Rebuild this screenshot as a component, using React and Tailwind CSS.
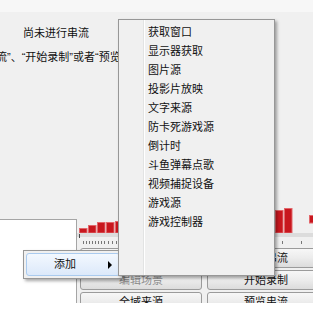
const sources = [
  "获取窗口",
  "显示器获取",
  "图片源",
  "投影片放映",
  "文字来源",
  "防卡死游戏源",
  "倒计时",
  "斗鱼弹幕点歌",
  "视频捕捉设备",
  "游戏源",
  "游戏控制器",
];

// level heights, left to right (middle ones sit under the menu)
const levels = [3, 5, 8, 11, 11, 12, 12, 13, 13, 14, 14, 15, 15, 16, 16, 17, 17, 18, 18, 19, 19, 20, 20, 23, 25];
const ticks = [6, 9, 12, 15, 18, 21, 24, 27, 31, 35, 39, 60, 90, 125, 160, 205, 224];

const Meter = () => (
  <svg width="236" height="42" className="block shrink-0">
    {levels.slice(1).map((h, i) => {
      const x = Math.round(2 + i * 8.9);
      return (
        <rect key={i} x={x + 0.5} y={28 - h + 0.5} width="7.5" height={h - 0.5} fill="#c8171e" stroke="#e2676b" strokeWidth="1" />
      );
    })}
    <rect x="232.5" y="10.5" width="5" height="7.5" fill="#c8171e" stroke="#e2676b" />
    <rect x="0" y="28" width="236" height="4" fill="#dcdcdc" />
    <rect x="2" y="29" width="1" height="4" fill="#4a4a4a" />
    {ticks.map((t) => (
      <rect key={t} x={t} y="36" width="1" height="3" fill="#777" />
    ))}
  </svg>
);

const Btn = ({ children, muted }) => (
  <div
    className={`h-[20px] flex items-center justify-center rounded-[3px] border border-[#9b9b9b] bg-gradient-to-b from-[#f7f7f7] via-[#ececec] to-[#dcdcdc] ${
      muted ? "text-[#8d8d8d]" : "text-[#111]"
    }`}
  >
    {children}
  </div>
);

export default function App() {
  return (
    <div className="relative w-[313px] h-[315px] overflow-hidden bg-white text-[11px] text-[#111] font-['Liberation_Sans','Noto_Sans_CJK_SC',sans-serif]">
      <div className="h-[12px] bg-[#f7f7f7]" />
      <div className="h-[291px] bg-[#f0f0f0] flex flex-col overflow-hidden">
        {/* preview */}
        <div className="h-[193px] shrink-0 pt-[13px] leading-[16px]">
          <div className="pl-[23px]">尚未进行串流</div>
          <div className="mt-[8px] ml-[-15px] whitespace-nowrap">串流”、“开始录制”或者“预览串流”开始</div>
        </div>

        <div className="flex flex-1">
          <div className="w-[77px] shrink-0 flex flex-col">
            <div className="h-[14px]" />
            <div className="flex-1 bg-white border-t border-r border-[#a5a5a5]" />
          </div>
          <div className="flex-1 flex flex-col">
            <Meter />
            <div className="mt-[1px] pl-[3px] grid grid-cols-[122px_118px] gap-x-[5px] gap-y-[2px]">
              <Btn>设置</Btn>
              <Btn>开始串流</Btn>
              <Btn muted>编辑场景</Btn>
              <Btn>开始录制</Btn>
              <Btn>全域来源</Btn>
              <Btn>预览串流</Btn>
            </div>
          </div>
        </div>
      </div>

      {/* context menu */}
      <div className="absolute left-[23px] top-[250px] w-[100px] h-[29px] border border-[#979797] bg-[#f0f0f0] shadow-[2px_2px_3px_rgba(0,0,0,0.35)] p-[2px]">
        <div className="h-[23px] rounded-[3px] border border-[#aacbef] bg-gradient-to-b from-[#f3f8fe] to-[#dce9fa] flex items-center pl-[27px] pr-[7px]">
          <span className="flex-1">添加</span>
          <span className="w-0 h-0 border-y-[4px] border-y-transparent border-l-[4px] border-l-black" />
        </div>
      </div>

      {/* submenu */}
      <div className="absolute left-[118px] top-[19px] w-[157px] h-[257px] border border-[#979797] bg-[#f0f0f0] shadow-[2px_2px_3px_rgba(0,0,0,0.35)] flex">
        <div className="w-[25px] shrink-0 border-r border-[#e2e3e3]" />
        <div className="w-px bg-white" />
        <div className="flex-1 pt-[3px] pl-[3px]">
          {sources.map((s) => (
            <div key={s} className="h-[19px] leading-[19px] whitespace-nowrap">
              {s}
            </div>
          ))}
        </div>
      </div>
    </div>
  );
}
